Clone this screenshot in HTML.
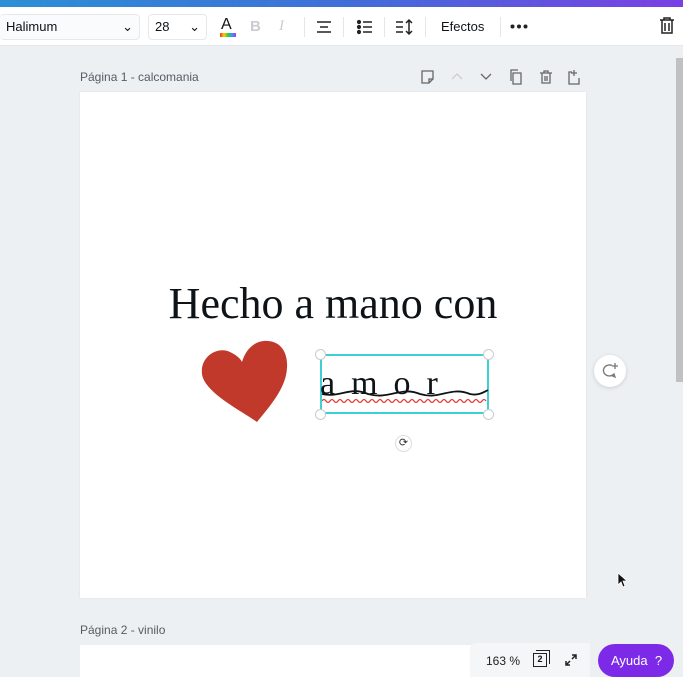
<!DOCTYPE html>
<html><head><meta charset="utf-8"><style>
*{box-sizing:border-box;margin:0;padding:0}
body{width:683px;height:677px;overflow:hidden;background:#edf0f3;font-family:"Liberation Sans",sans-serif;position:relative;color:#0e1318}
.grad{position:absolute;left:0;top:0;width:683px;height:7px;background:linear-gradient(90deg,#2b8fd6,#3f6fd8 50%,#7b3fe4)}
.tb{position:absolute;left:0;top:7px;width:683px;height:39px;background:#fff;border-bottom:1px solid #e3e6ea}
.abs{position:absolute;white-space:nowrap}
.dd{position:absolute;top:7px;height:26px;border:1px solid #e6e8eb;border-radius:4px;font-size:13px;line-height:24px;padding-left:6px}
.sep{position:absolute;top:10px;width:1px;height:20px;background:#e3e6ea}
.lbl{position:absolute;font-size:12px;color:#555c63}
.page{position:absolute;left:80px;top:92px;width:506px;height:506px;background:#fff;box-shadow:0 0 2px rgba(0,0,0,.08)}
.h{position:absolute;left:0;width:100%;top:188px;line-height:48px;text-align:center;font-family:"Liberation Serif",serif;font-size:44px;white-space:nowrap}
.hd{position:absolute;width:11px;height:11px;border-radius:50%;background:#fff;border:1px solid #c8ccd0}
</style></head><body>
<div class="grad"></div>
<div class="tb">
 <div class="dd" style="left:0;width:140px;border-left:none;background:#fafbfc">Halimum<span class="abs" style="right:6px;top:0">⌄</span></div>
 <div class="dd" style="left:148px;width:59px">28<span class="abs" style="right:6px;top:0">⌄</span></div>
 <div class="abs" style="left:221px;top:9px;font-size:16px">A</div>
 <div class="abs" style="left:220px;top:26px;width:16px;height:4px;background:linear-gradient(90deg,#e33,#fc0,#3c3,#39f,#a3f)"></div>
 <div class="abs" style="left:250px;top:11px;font-size:15px;font-weight:bold;color:#c9cdd1">B</div>
 <div class="abs" style="left:279px;top:11px;font-size:15px;font-style:italic;color:#c9cdd1;font-family:'Liberation Serif',serif">I</div>
 <div class="sep" style="left:304px"></div>
 <svg class="abs" style="left:316px;top:12px" width="16" height="16" stroke="#222" stroke-width="1.6"><path d="M1 3h14M4 8h8M1 13h14"/></svg>
 <div class="sep" style="left:343px"></div>
 <svg class="abs" style="left:357px;top:12px" width="16" height="16" stroke="#222" stroke-width="1.6" fill="#222"><circle cx="2" cy="3" r="1.3"/><circle cx="2" cy="8" r="1.3"/><circle cx="2" cy="13" r="1.3"/><path d="M6 3h9M6 8h9M6 13h9"/></svg>
 <div class="sep" style="left:384px"></div>
 <svg class="abs" style="left:395px;top:11px" width="18" height="18" stroke="#222" stroke-width="1.5" fill="none"><path d="M1 4h7M1 9h7M1 14h7M14 2v14M11 5l3-3 3 3M11 13l3 3 3-3"/></svg>
 <div class="sep" style="left:425px"></div>
 <div class="abs" style="left:441px;top:12px;font-size:13px">Efectos</div>
 <div class="sep" style="left:500px"></div>
 <svg class="abs" style="left:510px;top:17px" width="18" height="5" fill="#222"><circle cx="2.5" cy="2.5" r="2"/><circle cx="9" cy="2.5" r="2"/><circle cx="15.5" cy="2.5" r="2"/></svg>
 <svg class="abs" style="left:659px;top:10px" width="16" height="18" stroke="#222" stroke-width="1.5" fill="none"><path d="M1 3h14M5 3V1h6v2M3 3v13h10V3M6 6v8M10 6v8"/></svg>
</div>
<div class="lbl" style="left:80px;top:70px">Página 1 - calcomania</div>
<svg class="abs" style="left:420px;top:69px" width="165" height="16" stroke="#666" stroke-width="1.3" fill="none">
 <path d="M2 2h11v8l-4 4H2z M9 14v-4h4"/>
 <path d="M32 10l5-5 5 5" stroke="#ccc"/>
 <path d="M61 5l5 5 5-5"/>
 <path d="M93 4h8v11h-8zM91 12V1h7"/>
 <path d="M120 4h12M124 4V2h4v2M122 4v10h8V4M125 7v5M127 7v5"/>
 <path d="M152 3h-3v12h10V9M154 1v6M151 4h6"/>
</svg>
<div class="page">
 <div class="h">Hecho a mano con</div>
 <svg class="abs" style="left:120px;top:248px" width="90" height="86"><path d="M57 82 C40 70 4 52 2 34 C0 16 18 6 30 12 C36 15 40 18 42 22 C46 8 56 0 68 1 C82 2 88 14 87 28 C86 48 70 66 57 82Z" fill="#c0392b"/></svg>
 <div class="abs" style="left:240px;top:262px;width:169px;height:60px;border:2px solid #3fd0d6"></div>
 <svg class="abs" style="left:240px;top:280px" width="170" height="30"><path d="M2 22 C20 26 30 14 48 22 C70 28 80 14 100 22 C120 28 130 14 150 22 C158 24 164 20 168 18" stroke="#111" stroke-width="1.8" fill="none"/></svg>
 <div class="abs" style="left:240px;top:272px;font-family:'Liberation Serif',serif;font-size:34px;line-height:40px;letter-spacing:16px">amor</div>
 <svg class="abs" style="left:242px;top:306px" width="166" height="6"><path d="M0 3q2-3 4 0t4 0t4 0t4 0t4 0t4 0t4 0t4 0t4 0t4 0t4 0t4 0t4 0t4 0t4 0t4 0t4 0t4 0t4 0t4 0t4 0t4 0t4 0t4 0t4 0t4 0t4 0t4 0t4 0t4 0t4 0t4 0t4 0t4 0t4 0t4 0t4 0t4 0t4 0t4 0t4 0" stroke="#e53935" stroke-width="1.3" fill="none"/></svg>
 <div class="hd" style="left:235px;top:257px"></div><div class="hd" style="left:403px;top:257px"></div>
 <div class="hd" style="left:235px;top:317px"></div><div class="hd" style="left:403px;top:317px"></div>
 <div class="abs" style="left:315px;top:343px;width:17px;height:17px;border-radius:50%;border:1px solid #ddd;font-size:11px;text-align:center;line-height:15px;color:#333">⟳</div>
</div>
<div class="abs" style="left:594px;top:355px;width:32px;height:32px;border-radius:50%;background:#fff;box-shadow:0 1px 4px rgba(0,0,0,.15)"><svg style="position:absolute;left:8px;top:8px" width="17" height="16" stroke="#777" stroke-width="1.3" fill="none"><path d="M10 2.5A6 5.5 0 1 0 12 11l1 3-4-1.8"/><path d="M13 0v6M10 3h6"/></svg></div>
<div class="abs" style="left:676px;top:58px;width:7px;height:324px;background:#c1c1c1"></div>
<div class="lbl" style="left:80px;top:623px">Página 2 - vinilo</div>
<div class="abs" style="left:80px;top:645px;width:506px;height:32px;background:#fff"></div>
<div class="abs" style="left:470px;top:643px;width:120px;height:34px;background:#f4f6f8;border-radius:6px 0 0 0"></div>
<div class="abs" style="left:486px;top:654px;font-size:12px;color:#222">163 %</div>
<div class="abs" style="left:533px;top:653px;width:14px;height:14px;border:1.5px solid #222;font-size:9px;text-align:center;line-height:11px;font-weight:bold">2</div>
<div class="abs" style="left:536px;top:650px;width:14px;height:14px;border-top:1.5px solid #222;border-right:1.5px solid #222"></div>
<svg class="abs" style="left:564px;top:653px" width="14" height="14" stroke="#222" stroke-width="1.5" fill="none"><path d="M2 12l4-4M2 8v4h4M12 2L8 6M8 2h4v4"/></svg>
<div class="abs" style="left:598px;top:644px;width:76px;height:33px;border-radius:17px;background:#7d2ae8;color:#fff;font-size:13px;line-height:33px;padding-left:13px">Ayuda&nbsp; ?</div>
<svg class="abs" style="left:617px;top:572px" width="10" height="16"><path d="M1 1v12l3-3 2 5 2-1-2-5h4z" fill="#111" stroke="#fff" stroke-width=".8"/></svg>
</body></html>
